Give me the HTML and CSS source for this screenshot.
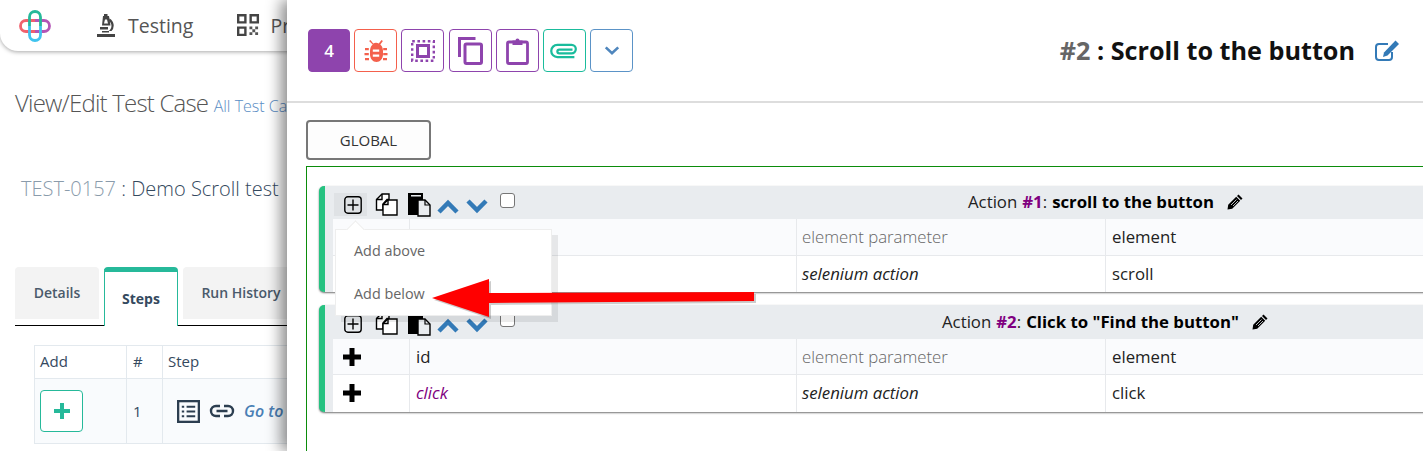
FILE: index.html
```html
<!DOCTYPE html>
<html lang="en">
<head>
<meta charset="utf-8">
<title>View/Edit Test Case</title>
<link rel="stylesheet" href="styles.css">
</head>
<body>
<div class="back">
  <nav class="nav">
    <svg class="logo" viewBox="0 0 32 32" width="32" height="32" fill="none" stroke-width="2.800">
      <path stroke="#f0616d" d="M16 10.500H7a5.500 5.500 0 0 0 0 11h9"/>
      <path stroke="#b455b6" d="M16 10.500h9a5.500 5.500 0 0 1 0 11h-9"/>
      <path stroke="#26b99a" d="M10.500 16V7a5.500 5.500 0 0 1 11 0v9"/>
      <path stroke="#3fc3ee" d="M10.500 16v9a5.500 5.500 0 0 0 11 0v-9"/>
    </svg>
    <svg class="nav-ic1" viewBox="0 0 18 23" width="18" height="23" fill="#444">
      <path fill-rule="evenodd" d="M7 0h3.500v2H12l1.500 9.500H5L6 2h1zM8 5.500 7 9.500h4L10 5.500z"/>
      <path d="M12.500 4.500a8 8 0 0 1 2 12.500h-3a6 6 0 0 0 .5-10zM3 13h8v2.500H3zM5 17h7v1.500H5zM0 20h18v3H0z"/>
    </svg>
    <span class="nav-item">Testing</span>
    <svg class="nav-ic2" viewBox="0 0 24 24" width="23" height="23">
      <path fill="#444" fill-rule="evenodd" d="M0 0h10v10H0zM2.500 2.500v5h5v-5zM13 0h10v10H13zM15.500 2.500v5h5v-5zM0 13h10v10H0zM2.500 15.500v5h5v-5z"/>
      <path fill="#555" d="M13 13h3v3h-3zM19 13h3v3h-3zM16 16h3v3h-3zM13 19h3v3h-3zM19 19h3v3h-3z"/>
    </svg>
    <span class="nav-item second-item">Projects</span>
  </nav>
  <h1 class="page-title">View/Edit Test Case <a class="crumb">All Test Cases</a></h1>
  <div class="case-title"><span class="case-id">TEST-0157</span> : Demo Scroll test</div>
  <div class="tabs">
    <div class="tab">Details</div>
    <div class="tab active">Steps</div>
    <div class="tab">Run History</div>
  </div>
  <div class="steps">
    <div class="cell c-add head">Add</div><div class="cell c-num head">#</div><div class="cell c-step head">Step</div>
    <div class="cell c-add alt"><button class="add-step"><svg viewBox="0 0 16 16" width="16" height="16"><path fill="#26b99a" d="M6 0h4v6h6v4h-6v6H6v-6H0V6h6z"/></svg></button></div>
    <div class="cell c-num alt">1</div>
    <div class="cell c-step alt step-row">
      <svg viewBox="0 0 24 24" width="23" height="23" fill="none" stroke="#2c3e50"><rect x="1.200" y="1.200" width="21.600" height="21.600" stroke-width="2.400"/><path stroke-width="2.200" d="M5 7h2.500M10 7h9M5 12h2.500M10 12h9M5 17h2.500M10 17h9"/></svg>
      <svg viewBox="0 0 26 14" width="26" height="14" fill="none" stroke="#2c3e50" stroke-width="2.400"><path d="M11 2H7a5 5 0 0 0 0 10h4M15 2h4a5 5 0 0 1 0 10h-4M7.500 7h11"/></svg>
      <em class="goto">Go to</em>
    </div>
  </div>
</div>

<aside class="panel">
  <header class="panel-head">
    <div class="tools">
      <button class="tool count">4</button>
      <button class="tool red"><svg viewBox="0 0 24 24" width="24" height="24" fill="#f4604c"><path fill-rule="evenodd" d="M6.500 1 9.200 4.500a6 6 0 0 1 5.600 0L17.500 1l1.400 1-2.600 3.500c.9.700 1.500 1.500 1.900 2.500 .5 1.200.8 2.500.8 4v3.500c0 4-2.900 7.500-6.500 7.500s-6.500-3.500-6.500-7.500V12c0-1.500.3-2.800.8-4 .4-1 1-1.800 1.900-2.500L5.100 2zM8.800 10.500v2.200h6.400v-2.200zM8.800 15.500v2.200h6.400v-2.200z"/><path d="M1 9h3.800v2.200H1zM.5 14h4.300v2.200H.5zM1 19h4v2.200H1zM19.200 9H23v2.200h-3.800zM19.200 14h4.300v2.200h-4.300zM19 19h4v2.200h-4z"/></svg></button>
      <button class="tool purple"><svg viewBox="0 0 24 22" width="24" height="22" fill="none" stroke="#8e44ad"><rect x="6.500" y="5.500" width="11" height="11" stroke-width="3"/><rect x="1.200" y="1.200" width="21.600" height="19.600" stroke-width="2.400" stroke-dasharray="2.600 2.600"/></svg></button>
      <button class="tool purple"><svg viewBox="0 0 25 28" width="25" height="28" fill="none" stroke="#8e44ad" stroke-width="3"><path d="M1.500 20V1.500h16"/><rect x="7" y="7" width="16.500" height="19.500" rx="1.500"/></svg></button>
      <button class="tool purple"><svg viewBox="0 0 23 28" width="23" height="28" fill="none" stroke="#8e44ad" stroke-width="2.800"><rect x="1.500" y="5" width="20" height="21.500" rx="1.500"/><path fill="#8e44ad" stroke="none" d="M6.500 3.500h3a2 2 0 0 1 4 0h3v4.500h-10z"/></svg></button>
      <button class="tool teal"><svg viewBox="0 0 30 18" width="30" height="17" fill="none" stroke="#1abc9c" stroke-width="2.400"><path d="M26 16H8a6.500 6.500 0 0 1 0-13h15a4.500 4.500 0 0 1 0 9H10a2 2 0 0 1 0-4h14"/></svg></button>
      <button class="tool blue"><svg viewBox="0 0 18 12" width="16" height="11" fill="none" stroke="#4f86bd" stroke-width="3"><path d="M2 2.500 9 9l7-6.500"/></svg></button>
    </div>
    <h2 class="panel-title"><span class="num">#2</span> : Scroll to the button</h2>
    <svg class="title-edit" viewBox="0 0 26 24" width="26" height="24" fill="none"><path stroke="#337ab7" stroke-width="2" d="M18 13v5a3 3 0 0 1-3 3H5a3 3 0 0 1-3-3V8a3 3 0 0 1 3-3h9"/><path fill="#337ab7" d="M21.500 1.500 25 5 13.500 16.500 9 18l1-4.500z"/></svg>
  </header>
  <div class="panel-body">
    <button class="global">GLOBAL</button>
    <section class="frame">
      <article class="block">
        <div class="block-head">
          <div class="block-tools">
            <span class="add hover"><svg viewBox="0 0 18 18" width="18" height="18" fill="none" stroke="#000" stroke-width="1.400"><rect x=".8" y=".8" width="16.400" height="16.400" rx="3"/><path d="M9 3.500v11M3.500 9h11"/></svg></span>
            <svg class="copy" viewBox="0 0 24 23" width="24" height="23" fill="none" stroke="#000" stroke-width="1.400"><path fill="#fff" d="M8 1 2.500 6.500V17H9V11l4-4.500h2V1z"/><path fill="#fff" d="M14 7 9 11.500V22h14V7z"/><path d="M9 11.500h5V7M2.500 6.500H8V1"/></svg>
            <svg class="paste" viewBox="0 0 24 24" width="24" height="24"><path d="M1 0h15v7h-5v15H1z"/><path fill="#e9ecef" stroke="#000" stroke-width="1.400" d="M11 7h7l5 5v11H11z"/><path fill="none" stroke="#000" stroke-width="1.200" d="M18 7v5h5"/><path fill="#e9ecef" d="M4 2h10v1.500H4z"/></svg>
            <svg class="up" viewBox="0 0 22 15" width="22" height="15" fill="none" stroke="#337ab7" stroke-width="4.500"><path d="M2 13 11 4l9 9"/></svg>
            <svg class="down" viewBox="0 0 22 15" width="22" height="15" fill="none" stroke="#337ab7" stroke-width="4.500"><path d="M2 2l9 9 9-9"/></svg>
            <span class="check"></span>
          </div>
          <div class="action-title a1">Action <b class="mark">#1</b>: <b class="name">scroll to the button</b><svg class="pencil" viewBox="0 0 16 16" width="16" height="16"><path d="M11.500 .5 15.500 4.500l-1.500 1.500L10 2zM9.200 2.800l4 4-8 8L.5 15.500l.7-4.700z"/><path fill="none" stroke="#e9ecef" stroke-width=".8" d="M9.500 5.500l-5.500 5.500M11 7l-5 5"/></svg></div>
        </div>
        <div class="row odd">
          <div class="td t1"></div><div class="td t2"></div><div class="td t3 muted">element parameter</div><div class="td t4">element</div>
        </div>
        <div class="row">
          <div class="td t1"></div><div class="td t2"></div><div class="td t3"><em>selenium action</em></div><div class="td t4">scroll</div>
        </div>
      </article>
      <article class="block second">
        <div class="block-head">
          <div class="block-tools">
            <span class="add"><svg viewBox="0 0 18 18" width="18" height="18" fill="none" stroke="#000" stroke-width="1.400"><rect x=".8" y=".8" width="16.400" height="16.400" rx="3"/><path d="M9 3.500v11M3.500 9h11"/></svg></span>
            <svg class="copy" viewBox="0 0 24 23" width="24" height="23" fill="none" stroke="#000" stroke-width="1.400"><path fill="#fff" d="M8 1 2.500 6.500V17H9V11l4-4.500h2V1z"/><path fill="#fff" d="M14 7 9 11.500V22h14V7z"/><path d="M9 11.500h5V7M2.500 6.500H8V1"/></svg>
            <svg class="paste" viewBox="0 0 24 24" width="24" height="24"><path d="M1 0h15v7h-5v15H1z"/><path fill="#e9ecef" stroke="#000" stroke-width="1.400" d="M11 7h7l5 5v11H11z"/><path fill="none" stroke="#000" stroke-width="1.200" d="M18 7v5h5"/><path fill="#e9ecef" d="M4 2h10v1.500H4z"/></svg>
            <svg class="up" viewBox="0 0 22 15" width="22" height="15" fill="none" stroke="#337ab7" stroke-width="4.500"><path d="M2 13 11 4l9 9"/></svg>
            <svg class="down" viewBox="0 0 22 15" width="22" height="15" fill="none" stroke="#337ab7" stroke-width="4.500"><path d="M2 2l9 9 9-9"/></svg>
            <span class="check"></span>
          </div>
          <div class="action-title a2">Action <b class="mark">#2</b>: <b class="name">Click to "Find the button"</b><svg class="pencil" viewBox="0 0 16 16" width="16" height="16"><path d="M11.500 .5 15.500 4.500l-1.500 1.500L10 2zM9.200 2.800l4 4-8 8L.5 15.500l.7-4.700z"/><path fill="none" stroke="#e9ecef" stroke-width=".8" d="M9.500 5.500l-5.500 5.500M11 7l-5 5"/></svg></div>
        </div>
        <div class="row odd">
          <div class="td t1"><svg viewBox="0 0 18 18" width="18" height="18"><path d="M6.500 0h5v6.500H18v5h-6.500V18h-5v-6.500H0v-5h6.500z"/></svg></div><div class="td t2">id</div><div class="td t3 muted">element parameter</div><div class="td t4">element</div>
        </div>
        <div class="row">
          <div class="td t1"><svg viewBox="0 0 18 18" width="18" height="18"><path d="M6.500 0h5v6.500H18v5h-6.500V18h-5v-6.500H0v-5h6.500z"/></svg></div><div class="td t2 purple-text"><em>click</em></div><div class="td t3"><em>selenium action</em></div><div class="td t4">click</div>
        </div>
      </article>
    </section>
  </div>
</aside>

<div class="menu">
  <span class="caret"></span>
  <div class="menu-item">Add above</div>
  <div class="menu-item">Add below</div>
</div>

<svg class="red-arrow" viewBox="0 0 340 55" width="340" height="55">
  <polygon fill="#000" opacity=".2" points="9,30 66,11 66,25 331,24 331,33 66,35 66,49"/>
  <polygon fill="#f00" points="7,28 64,9 64,23 329,22 329,31 64,33 64,47"/>
</svg>
</body>
</html>
```
FILE: styles.css
```css
* { box-sizing: border-box; }
html, body { margin: 0; height: 100%; }
body {
  position: relative;
  height: 451px;
  overflow: hidden;
  background: #fff;
  font-family: "Open Sans", "Liberation Sans", sans-serif;
  color: #212529;
}
svg { display: block; flex: none; }
.back { width: 300px; overflow: hidden; height: 451px; }
.nav {
  display: flex;
  align-items: center;
  width: 300px;
  height: 51px;
  padding-left: 19px;
  background: #fff;
  border-bottom-left-radius: 18px;
  box-shadow: 0 1px 4px rgba(0,0,0,.35);
  white-space: nowrap;
}
.nav-ic1 { margin-left: 46px; }
.nav-item { margin-left: 13px; font-size: 19.500px; color: #555; }
.nav-item.second-item { margin-left: 10px; }
.nav-ic2 { margin-left: 44px; }
.page-title {
  margin: 36px 0 0 15px;
  font-size: 24px;
  font-weight: 300;
  line-height: 32px;
  letter-spacing: -.8px;
  color: #555;
  white-space: nowrap;
}
.crumb { font-size: 16px; letter-spacing: 0; color: #5a8dc4; }
.case-title { margin: 54px 0 0 21px; font-size: 20px; line-height: 26px; color: #34495e; font-weight: 300; white-space: nowrap; }
.case-id { color: #8a9bab; }
.tabs { display: flex; align-items: flex-end; gap: 5px; width: 320px; margin: 66px 0 0 15px; height: 58px; border-bottom: 1px solid #000; }
.tab {
  flex: none;
  width: 84px;
  height: 52px;
  margin-bottom: 6px;
  padding-top: 16px;
  background: #f3f3f3;
  border-radius: 4px 4px 0 0;
  text-align: center;
  font-size: 14px;
  font-weight: 600;
  line-height: 20px;
  color: #4a5a6b;
}
.tab:nth-child(3) { width: 116px; }
.tab.active {
  width: 74px;
  height: 59px;
  margin-bottom: -1px;
  padding-top: 17px;
  background: #fff;
  border: 1px solid #26b99a;
  border-top: 5px solid #26b99a;
  border-bottom: 0;
  font-weight: 700;
  color: #34495e;
}
.steps {
  display: grid;
  grid-template-columns: 92px 36px 200px;
  width: 328px;
  margin: 19px 0 0 34px;
  border-top: 1px solid #e3e9ee;
  border-left: 1px solid #e3e9ee;
}
.cell { border-right: 1px solid #e3e9ee; border-bottom: 1px solid #e3e9ee; padding-left: 5px; font-size: 15px; color: #34495e; }
.head { height: 33px; line-height: 31px; font-weight: 500; }
.alt { height: 65px; background: #f9fbfd; display: flex; align-items: center; }
.steps .cell:nth-child(2), .steps .cell:nth-child(5) { padding-left: 6px; }
.add-step { display: flex; align-items: center; justify-content: center; width: 43px; height: 42px; padding: 0; background: #fff; border: 1px solid #26b99a; border-radius: 4px; }
.step-row { gap: 9px; padding-left: 14px; }
.goto { color: #4a7fb5; font-size: 16px; font-weight: 600; }

.panel {
  position: absolute;
  left: 287px; top: 0; right: 0; bottom: 0;
  background: #fff;
  box-shadow: -6px 0 14px rgba(0,0,0,.45);
}
.panel-head {
  display: flex;
  align-items: center;
  height: 103px;
  padding: 0 23px 0 21px;
  border-bottom: 2px solid #ddd;
}
.tools { display: flex; gap: 4.200px; margin-right: auto; }
.tool {
  display: flex;
  align-items: center;
  justify-content: center;
  width: 43px;
  height: 43px;
  padding: 0;
  background: #fff;
  border: 1px solid;
  border-radius: 4px;
}
.count { width: 42px; background: #8e44ad; border-color: #8e44ad; color: #fff; font: 600 17px "Open Sans", sans-serif; }
.red { border-color: #f4604c; }
.purple { border-color: #8e44ad; }
.teal { border-color: #1abc9c; }
.blue { border-color: #5b93c7; }
.panel-title { margin: -2px 19px 0 0; font-size: 25.200px; font-weight: 700; color: #111; line-height: 32px; white-space: nowrap; }
.num { color: #666; }
.panel-body { padding: 17px 0 0 19px; }
.global {
  display: block;
  width: 125px;
  height: 40px;
  padding: 0;
  background: #fdfdfd;
  border: 2px solid #777;
  border-radius: 4px;
  font: 500 15px "Open Sans", sans-serif;
  color: #333;
}
.frame {
  width: 1140px;
  height: 300px;
  margin-top: 6px;
  padding: 19px 0 0 12px;
  border: 1px solid #0b8c0b;
}
.block {
  padding-left: 8px;
  background: #e9ecef;
  border-left: 6px solid #26c281;
  border-radius: 5px;
  box-shadow: 0 1px 2px rgba(0,0,0,.55);
}
.block.second { margin-top: 13px; }
.block-head { display: flex; height: 33px; position: relative; }
.block.second .block-head { height: 34px; }
.block-tools { display: flex; align-items: flex-start; padding: 7px 0 0 1px; width: 190px; }
.add { display: flex; align-items: center; width: 33px; height: 23px; padding-left: 10px; flex: none; }
.add.hover { background: #dfe2e5; }
.copy { margin-left: 7px; }
.paste { margin-left: 9px; }
.up { margin: 6px 0 0 6px; }
.down { margin: 6px 0 0 7px; }
.check { display: block; width: 15px; height: 15px; margin-left: 12px; background: #fff; border: 1px solid #767676; border-radius: 3px; }
.action-title { position: absolute; top: 5px; font-size: 16.800px; line-height: 22px; color: #222; white-space: nowrap; display: flex; align-items: center; }
.a1 { left: 635px; }
.a2 { left: 609px; top: 6px; }
.mark { color: #800080; margin-left: 5px; }
.name { color: #000; margin-left: 5px; font-weight: 700; }
.pencil { margin-left: 13px; }
.row { display: flex; height: 37px; background: #fff; }
.row.odd { background: #fafbfd; border-bottom: 1px solid #e7e9ec; }
.row:last-child { height: 36px; }
.second .row.odd { height: 36px; }
.second .row:last-child { height: 37px; }
.td { flex: none; display: flex; align-items: center; padding-left: 6px; padding-bottom: 2px; font-size: 16.800px; color: #222; border-right: 1px solid #e7e9ec; }
.second .odd .td { padding-bottom: 0; }
.t1 { width: 77px; padding-left: 10px; }
.t2 { width: 387px; }
.t3 { width: 309px; padding-left: 5px; }
.t4 { flex: 1; border-right: 0; }
.muted { color: #666; font-weight: 300; }
.purple-text { color: #800080; }
.menu {
  position: absolute;
  left: 335px; top: 229px;
  width: 217px; height: 87px;
  padding-top: 3px;
  background: #fff;
  border: 1px solid #eee;
  box-shadow: 6px 6px 0 rgba(0,0,0,.08);
  font-size: 14.400px;
  color: #666;
}
.menu-item { height: 43px; line-height: 35px; padding-left: 18px; }
.caret {
  position: absolute;
  left: 13px; top: -7px;
  width: 13px; height: 13px;
  background: #fff;
  border-left: 1px solid #eee;
  border-top: 1px solid #eee;
  transform: rotate(45deg);
}
.red-arrow { position: absolute; left: 425px; top: 270px; }
```
